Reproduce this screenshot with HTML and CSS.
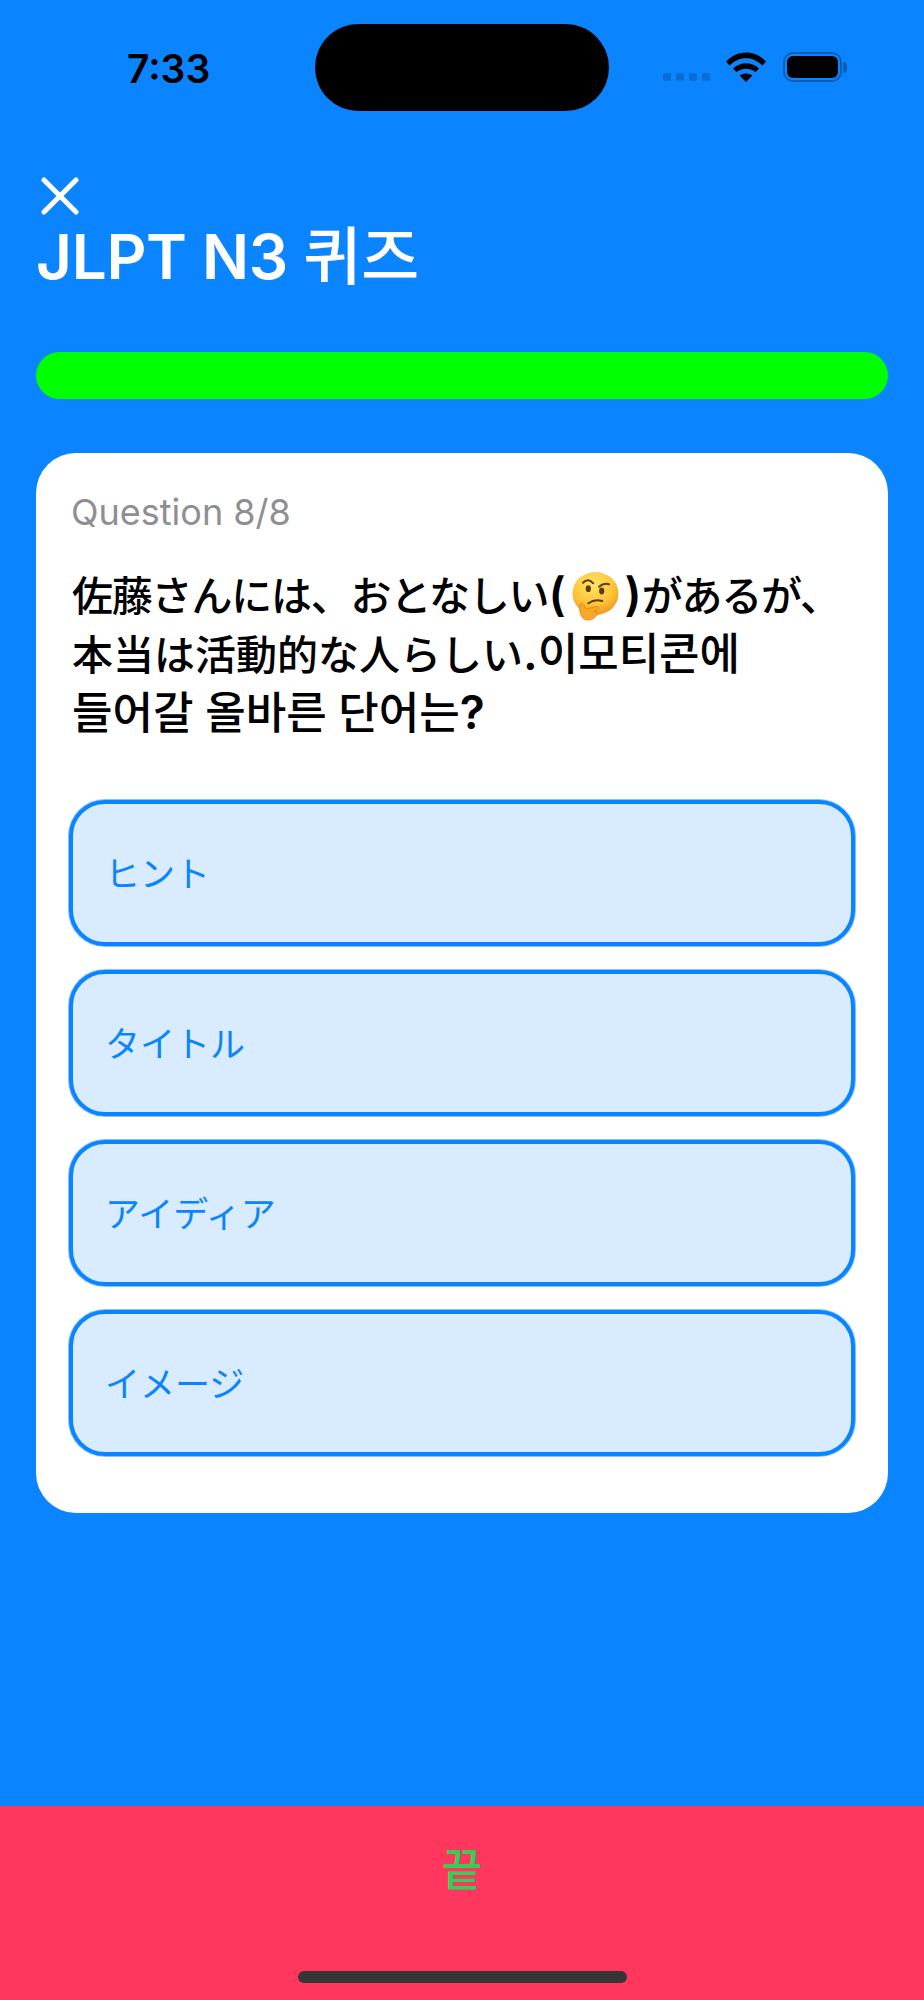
FILE: index.html
```html
<!DOCTYPE html>
<html lang="ko">
<head>
    <meta charset="UTF-8">
    <meta name="viewport" content="width=device-width, initial-scale=1.0">
    <title>JLPT N3 퀴즈</title>
    <link rel="stylesheet" href="styles.css">
</head>
<body>
    <div class="status-bar">
        <span class="time">7:33</span>
        <div class="island"></div>
        <div class="status-icons">
            <div class="cell-dots"><i></i><i></i><i></i><i></i></div>
            <svg class="wifi" width="40" height="30" viewBox="0 0 40 30">
                <path d="M0 9.5C5.5 3.8 12.5 0.5 20 0.5S34.500 3.800 40 9.500L36.500 13.500C31.800 8.800 26 6.200 20 6.200S8.200 8.800 3.500 13.500Z"/>
                <path d="M7 16.500C10.500 13.200 15 11.200 20 11.200S29.500 13.200 33 16.500L29.500 20.300C27 18 23.600 16.800 20 16.800S13 18 10.500 20.300Z"/>
                <path d="M13.500 23.500C15.300 22.200 17.500 21.500 20 21.500S24.700 22.200 26.500 23.500L20 30Z"/>
            </svg>
            <div class="battery"><div class="battery-level"></div></div>
            <div class="battery-nub"></div>
        </div>
    </div>

    <div class="main">
        <button class="close-btn" aria-label="닫기">
            <svg width="38" height="38" viewBox="0 0 38 38">
                <path d="M3 3L35 35M35 3L3 35" stroke="white" stroke-width="5" stroke-linecap="round"/>
            </svg>
        </button>
        <h1>JLPT N3 <span class="title-ko">퀴즈</span></h1>
        <div class="progress"></div>

        <div class="card">
            <p class="count">Question 8/8</p>
            <p class="question">
                <span class="question-ja" lang="ja"><span class="tight">佐藤さんには、おとなしい</span><span class="paren">(</span><svg class="emoji" width="47" height="49" viewBox="0 0 47 49">
                    <defs>
                        <radialGradient id="face" cx="45%" cy="30%" r="75%">
                            <stop offset="0" stop-color="#ffe566"/>
                            <stop offset="0.6" stop-color="#fdc537"/>
                            <stop offset="1" stop-color="#f0901c"/>
                        </radialGradient>
                    </defs>
                    <ellipse cx="23.500" cy="21.500" rx="23" ry="21.500" fill="url(#face)"/>
                    <path d="M11 10.700Q16 5.500 21.300 11.300" fill="none" stroke="#5d3a12" stroke-width="2" stroke-linecap="round"/>
                    <path d="M27 14.700Q32 10.500 37 12.300" fill="none" stroke="#5d3a12" stroke-width="2" stroke-linecap="round"/>
                    <ellipse cx="16.300" cy="16.700" rx="2.600" ry="3.400" fill="#5d3a12"/>
                    <ellipse cx="29.700" cy="19" rx="2.600" ry="3.400" fill="#5d3a12"/>
                    <path d="M16.300 31.300Q23 26.500 30.300 29" fill="none" stroke="#5d3a12" stroke-width="2" stroke-linecap="round"/>
                    <path d="M12 47C8 44 7 38 8 33C9 30 12 31 12.500 34L14 37L24 34.500C27 34 28 37 25.500 38L22 39L25 41C26 43 24 44 23 45C21 48 15 49 12 47Z" fill="#f9a825" stroke="#dd8618" stroke-width="0.800"/>
                </svg><span class="paren">)</span><span class="tight">があるが、</span><br>本当は活動的な人らしい<span class="paren">.</span></span>이모티콘에<br>들어갈 올바른 단어는<span class="paren">?</span>
            </p>
            <div class="options" lang="ja">
                <div class="option">ヒント</div>
                <div class="option">タイトル</div>
                <div class="option">アイディア</div>
                <div class="option">イメージ</div>
            </div>
        </div>
    </div>

    <div class="footer">
        <span class="finish">끝</span>
        <div class="home-bar"></div>
    </div>
</body>
</html>
```

FILE: styles.css
```css
* {
    box-sizing: border-box;
}
body {
    margin: 0;
    height: 2000px;
    display: flex;
    flex-direction: column;
    font-family: Inter, "Noto Sans CJK KR", sans-serif;
    background-color: #0a84ff;
    color: black;
}
[lang="ja"] {
    font-family: Inter, "Noto Sans CJK JP", sans-serif;
}

/* status bar */
.status-bar {
    display: flex;
    align-items: flex-start;
    padding-top: 24px;
    height: 111px;
    flex-shrink: 0;
}
.time {
    width: 315px;
    padding: 21px 0 0 127px;
    font-size: 39px;
    line-height: 47px;
    font-weight: 600;
}
.island {
    width: 294px;
    height: 87px;
    border-radius: 44px;
    background-color: black;
}
.status-icons {
    display: flex;
    align-items: flex-start;
    margin: 28px 0 0 54px;
}
.cell-dots {
    display: flex;
    gap: 5px;
    margin-top: 21px;
}
.cell-dots i {
    width: 8px;
    height: 8px;
    border-radius: 2px;
    background-color: #0b6cd2;
}
.wifi {
    margin-left: 16px;
}
.battery {
    width: 59px;
    height: 30px;
    margin-left: 17px;
    padding: 2px;
    border: 2px solid #0b5fb6;
    border-radius: 10px;
}
.battery-level {
    height: 100%;
    border-radius: 6px;
    background-color: black;
}
.battery-nub {
    width: 4px;
    height: 11px;
    margin: 10px 0 0 1px;
    border-radius: 0 4px 4px 0;
    background-color: #0b5fb6;
}

/* main */
.main {
    flex: 1;
    padding: 66px 36px 0;
}
.close-btn {
    display: block;
    padding: 0;
    margin-left: 5px;
    height: 38px;
    border: none;
    background: none;
}
h1 {
    margin: 4px 0 0;
    font-size: 62px;
    line-height: 74px;
    font-weight: 600;
    color: white;
    letter-spacing: -0.300px;
}
.title-ko {
    font-size: 63px;
    font-weight: 500;
    letter-spacing: 0;
}
.progress {
    height: 47px;
    margin-top: 58px;
    border-radius: 24px;
    background-color: #00ff00;
}
.card {
    margin-top: 54px;
    height: 1060px;
    padding: 38px 33px 0;
    border-radius: 40px;
    background-color: white;
}
.count {
    margin: 0;
    padding-left: 2px;
    font-size: 36px;
    line-height: 42px;
    color: #8e8e93;
}
.question {
    margin: 33px 0 0;
    padding-left: 3px;
    font-size: 44px;
    line-height: 58px;
    font-weight: 500;
}
.question-ja {
    font-size: 41px;
}
.tight {
    letter-spacing: -1.200px;
}
.paren {
    font-family: Inter, sans-serif;
    font-size: 46px;
    line-height: 46px;
    font-weight: 600;
}
.emoji {
    vertical-align: -10px;
    margin: 0 6px;
}
.options {
    display: flex;
    flex-direction: column;
    gap: 24px;
    margin-top: 58px;
}
.option {
    display: flex;
    align-items: center;
    height: 146px;
    padding: 0 0 4px 32px;
    border: 4px solid #0a84ff;
    border-radius: 36px;
    background-color: #d9ebff;
    box-shadow: 0 0 0 1px rgba(10, 132, 255, 0.5);
    color: #0a84ff;
    font-size: 35px;
}

/* footer */
.footer {
    position: relative;
    height: 194px;
    flex-shrink: 0;
    padding-top: 36px;
    text-align: center;
    background-color: #ff375f;
}
.finish {
    font-size: 44px;
    line-height: 56px;
    font-weight: 500;
    color: #30d158;
}
.home-bar {
    position: absolute;
    left: 298px;
    bottom: 17px;
    width: 329px;
    height: 12px;
    border-radius: 6px;
    background-color: #363636;
}
```
